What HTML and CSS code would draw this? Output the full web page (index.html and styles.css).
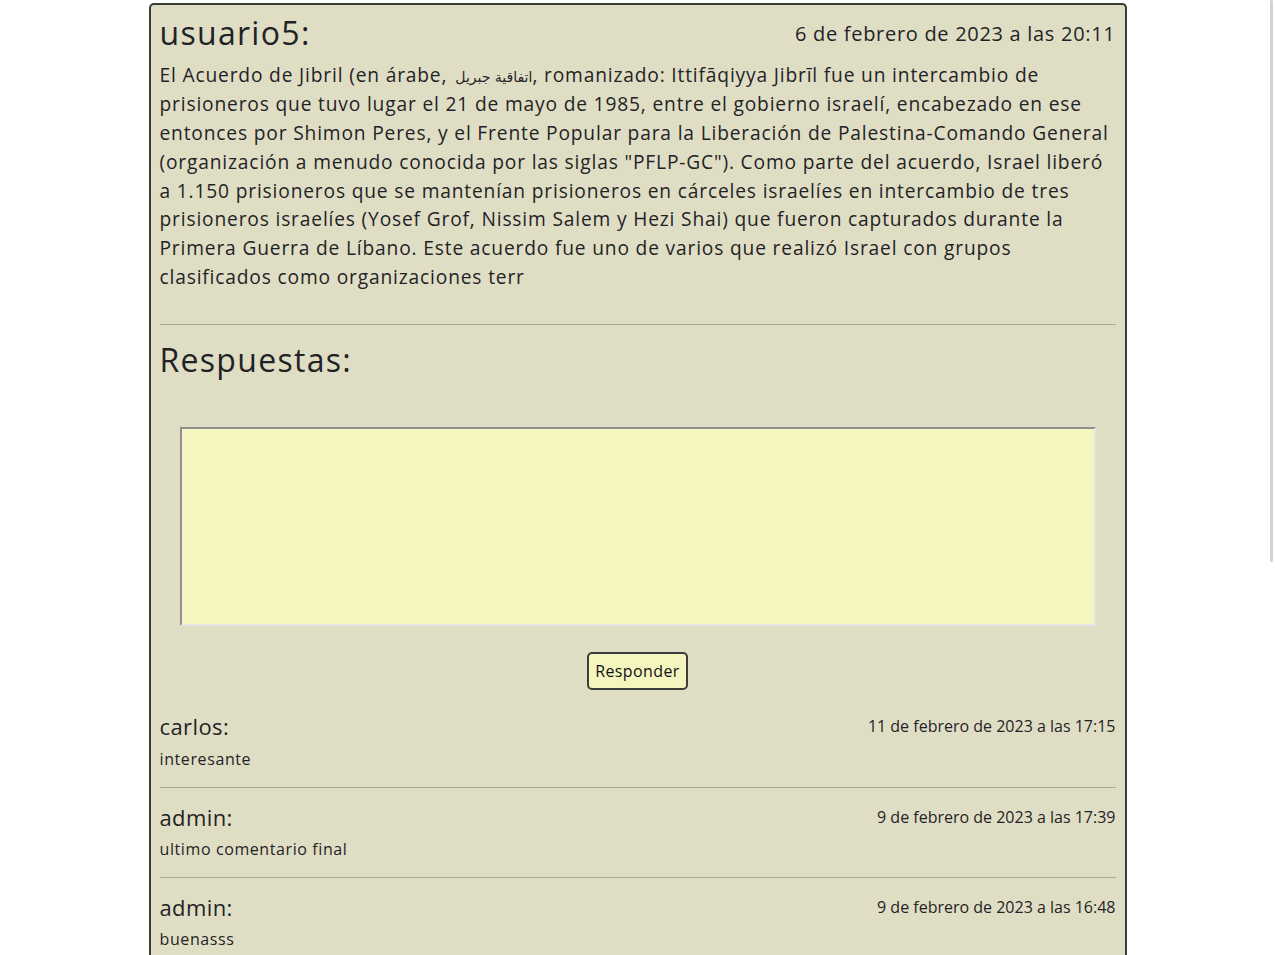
FILE: index.html
```html
<!DOCTYPE html>
<html lang="es">
<head>
<meta charset="utf-8">
<title>Publicación</title>
<link rel="stylesheet" href="styles.css">
</head>
<body>
<div class="scroll-thumb"></div>
<main class="post-card">
  <header class="post-head">
    <h2 class="post-user">usuario5:</h2>
    <span class="post-date">6 de febrero de 2023 a las 20:11</span>
  </header>
  <p class="post-body">El Acuerdo de Jibril (en árabe,<bdi class="ar">اتفاقية جبريل</bdi>, romanizado: Ittifāqiyya Jibrīl fue un intercambio de prisioneros que tuvo lugar el 21 de mayo de 1985, entre el gobierno israelí, encabezado en ese entonces por Shimon Peres, y el Frente Popular para la Liberación de Palestina-Comando General (organización a menudo conocida por las siglas "PFLP-GC"). Como parte del acuerdo, Israel liberó a 1.150 prisioneros que se mantenían prisioneros en cárceles israelíes en intercambio de tres prisioneros israelíes (Yosef Grof, Nissim Salem y Hezi Shai) que fueron capturados durante la Primera Guerra de Líbano. Este acuerdo fue uno de varios que realizó Israel con grupos clasificados como organizaciones terr</p>
  <hr class="rule">
  <h2 class="section-title">Respuestas:</h2>
  <form class="reply-form">
    <textarea class="reply-input"></textarea>
    <button type="button" class="reply-btn">Responder</button>
  </form>
  <section class="comments">
    <article class="comment">
      <div class="comment-head">
        <span class="comment-user">carlos:</span>
        <span class="comment-date">11 de febrero de 2023 a las 17:15</span>
      </div>
      <p class="comment-text">interesante</p>
    </article>
    <hr class="rule">
    <article class="comment">
      <div class="comment-head">
        <span class="comment-user">admin:</span>
        <span class="comment-date">9 de febrero de 2023 a las 17:39</span>
      </div>
      <p class="comment-text">ultimo comentario final</p>
    </article>
    <hr class="rule">
    <article class="comment">
      <div class="comment-head">
        <span class="comment-user">admin:</span>
        <span class="comment-date">9 de febrero de 2023 a las 16:48</span>
      </div>
      <p class="comment-text">buenasss</p>
    </article>
    <hr class="rule">
  </section>
</main>
</body>
</html>
```

FILE: styles.css
```css
* { box-sizing: border-box; }

html, body {
  margin: 0;
  padding: 0;
  background: #ffffff;
}

body {
  font-family: "Open Sans", "Noto Sans", "DejaVu Sans", sans-serif;
  color: #1f2326;
}

.scroll-thumb {
  position: fixed;
  top: 0;
  right: 2px;
  width: 3px;
  height: 562px;
  background: #d2d2d2;
  border-radius: 2px;
}

.post-card {
  width: 978px;
  margin: 3px auto 0;
  padding: 9px 9px 60px;
  background: #dfdec5;
  border: 2px solid #393c37;
  border-bottom: none;
  border-radius: 5px 5px 0 0;
}

.post-head {
  display: flex;
  justify-content: space-between;
  align-items: center;
  margin-bottom: 9px;
}

.post-user,
.section-title {
  margin: 0;
  font-size: 32px;
  font-weight: 500;
  line-height: 1.2;
  letter-spacing: 1.3px;
}

.post-date {
  font-size: 20px;
  font-weight: 500;
  letter-spacing: 0.7px;
}

.post-body {
  margin: 0 0 32px;
  font-size: 19.2px;
  font-weight: 500;
  line-height: 1.5;
  letter-spacing: 0.83px;
}

.ar {
  display: inline-block;
  margin-left: 8px;
  font-family: "DejaVu Sans", sans-serif;
  font-size: 14px;
  font-weight: 400;
  line-height: 1;
  letter-spacing: 0;
}

.rule {
  margin: 16px 0;
  border: 0;
  border-top: 1px solid #a8a89b;
}

.section-title {
  margin-bottom: 8px;
}

.reply-form {
  display: flex;
  flex-direction: column;
  align-items: center;
  padding: 40px 20px 0;
}

.reply-input {
  display: block;
  width: 100%;
  height: 199px;
  margin: 0;
  background: #f5f5c0;
  border: 2px solid #e3e3e3;
  border-top-color: #8f8f8f;
  border-left-color: #8f8f8f;
  resize: none;
}

.reply-btn {
  margin-top: 26px;
  height: 38px;
  padding: 0 6px;
  font-family: inherit;
  font-size: 16px;
  font-weight: 500;
  letter-spacing: 0.4px;
  color: #111;
  background: #f5f5c0;
  border: 2px solid #3b3e39;
  border-radius: 5px;
}

.comments {
  margin-top: 23px;
}

.comment-head {
  display: flex;
  justify-content: space-between;
  align-items: center;
}

.comment-user {
  font-size: 22px;
  font-weight: 500;
  line-height: 26.4px;
  letter-spacing: 0.4px;
}

.comment-date {
  font-size: 16px;
  font-weight: 500;
}

.comment-text {
  margin: 7px 0 0;
  font-size: 16px;
  font-weight: 500;
  line-height: 24px;
  letter-spacing: 0.6px;
}
```
